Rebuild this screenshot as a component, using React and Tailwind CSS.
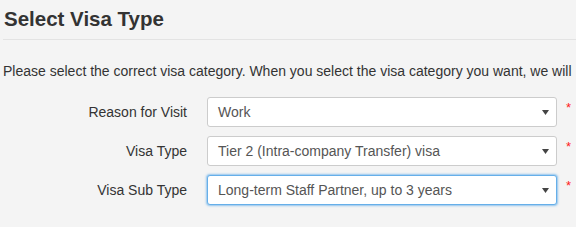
import React from "react";

function Arrow() {
  return (
    <svg width="7" height="5" viewBox="0 0 7 5" className="block">
      <path d="M0 0 H7 L3.5 5 Z" fill="#444" />
    </svg>
  );
}

function Row({ label, value, focused }) {
  return (
    <div className="flex items-start h-[30px]">
      <div className="w-[187px] shrink-0 text-right leading-[30px] text-[14px] text-[#333]">{label}</div>
      <div
        className={
          "ml-[20px] w-[350px] h-[30px] shrink-0 bg-white rounded-[3px] border flex items-center pl-[10px] pr-[7px] " +
          (focused
            ? "border-[#66afe9] shadow-[0_0_2px_1px_rgba(102,175,233,0.7)]"
            : "border-[#cccccc]")
        }
      >
        <span className="flex-1 text-[14px] text-[#555] leading-[20px]">{value}</span>
        <Arrow />
      </div>
      <div className="ml-[9px] mt-[4px] text-[#ff2020] text-[13px] leading-[14px]">*</div>
    </div>
  );
}

export default function App() {
  return (
    <div
      className="w-[576px] h-[227px] overflow-hidden bg-[#f4f4f4] text-[#333] whitespace-nowrap"
      style={{ fontFamily: '"Liberation Sans", Arial, sans-serif' }}
    >
      <div className="pt-[8px] pb-[9px] pl-[1px] border-b border-[#e3e3e3] ml-[3px]">
        <h1 className="text-[20.5px] leading-[22px] font-bold text-[#333]">Select Visa Type</h1>
      </div>
      <p className="mt-[21px] pl-[3px] text-[14px] leading-[20px] text-[#333]">
        Please select the correct visa category. When you select the visa category you want, we will
      </p>
      <div className="mt-[16px] flex flex-col gap-[9px]">
        <Row label="Reason for Visit" value="Work" />
        <Row label="Visa Type" value="Tier 2 (Intra-company Transfer) visa" />
        <Row label="Visa Sub Type" value="Long-term Staff Partner, up to 3 years" focused />
      </div>
    </div>
  );
}
